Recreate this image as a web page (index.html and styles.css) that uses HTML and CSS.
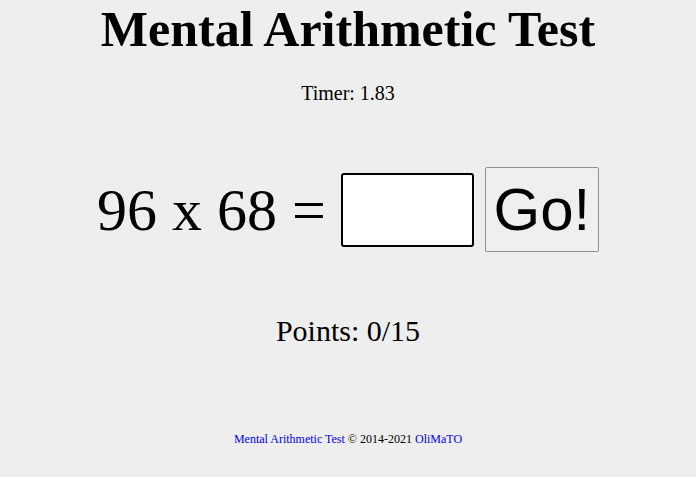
FILE: index.html
```html
<!DOCTYPE html>
<html>
<head>
<meta charset="utf-8">
<link rel="stylesheet" href="styles.css">
</head>
<body>
<div class="page">
  <h1 class="title">Mental Arithmetic Test</h1>
  <div class="timer">Timer: 1.83</div>
  <div class="question">
    <span class="expr">96 x 68 =</span>
    <input class="answer" type="text">
    <button class="go">Go!</button>
  </div>
  <div class="points">Points: 0/15</div>
  <div class="footer"><a href="#">Mental Arithmetic Test</a> © 2014-2021 <a href="#">OliMaTO</a></div>
</div>
</body>
</html>
```

FILE: styles.css
```css
html, body {
  margin: 0;
  padding: 0;
  background: #eeeeee;
}
body {
  font-family: "Liberation Serif", "Times New Roman", serif;
  color: #000;
}
.page {
  display: flex;
  flex-direction: column;
  align-items: center;
}
.title {
  margin: 0;
  font-size: 50px;
  font-weight: bold;
  line-height: 58px;
}
.timer {
  margin-top: 24px;
  font-size: 20px;
  line-height: 22px;
}
.question {
  margin-top: 63px;
  display: flex;
  align-items: center;
  gap: 11px;
}
.expr {
  font-size: 60px;
  line-height: 70px;
  margin-right: 4px;
}
.answer {
  box-sizing: border-box;
  width: 133px;
  height: 74px;
  border: 2px solid #000;
  border-radius: 3px;
  background: #fff;
  margin: 0;
  font-size: 40px;
}
.go {
  box-sizing: border-box;
  width: 114px;
  height: 85px;
  margin: 0;
  padding: 0;
  font-family: "Liberation Sans", Arial, sans-serif;
  font-size: 60px;
  color: #000;
  background: #efefef;
  border: 1px solid #8f8f8f;
  border-radius: 2px;
}
.points {
  margin-top: 62px;
  font-size: 30px;
  line-height: 34px;
}
.footer {
  margin-top: 84px;
  font-size: 12px;
  line-height: 14px;
}
.footer a {
  color: #0000ee;
  text-decoration: none;
}
```
